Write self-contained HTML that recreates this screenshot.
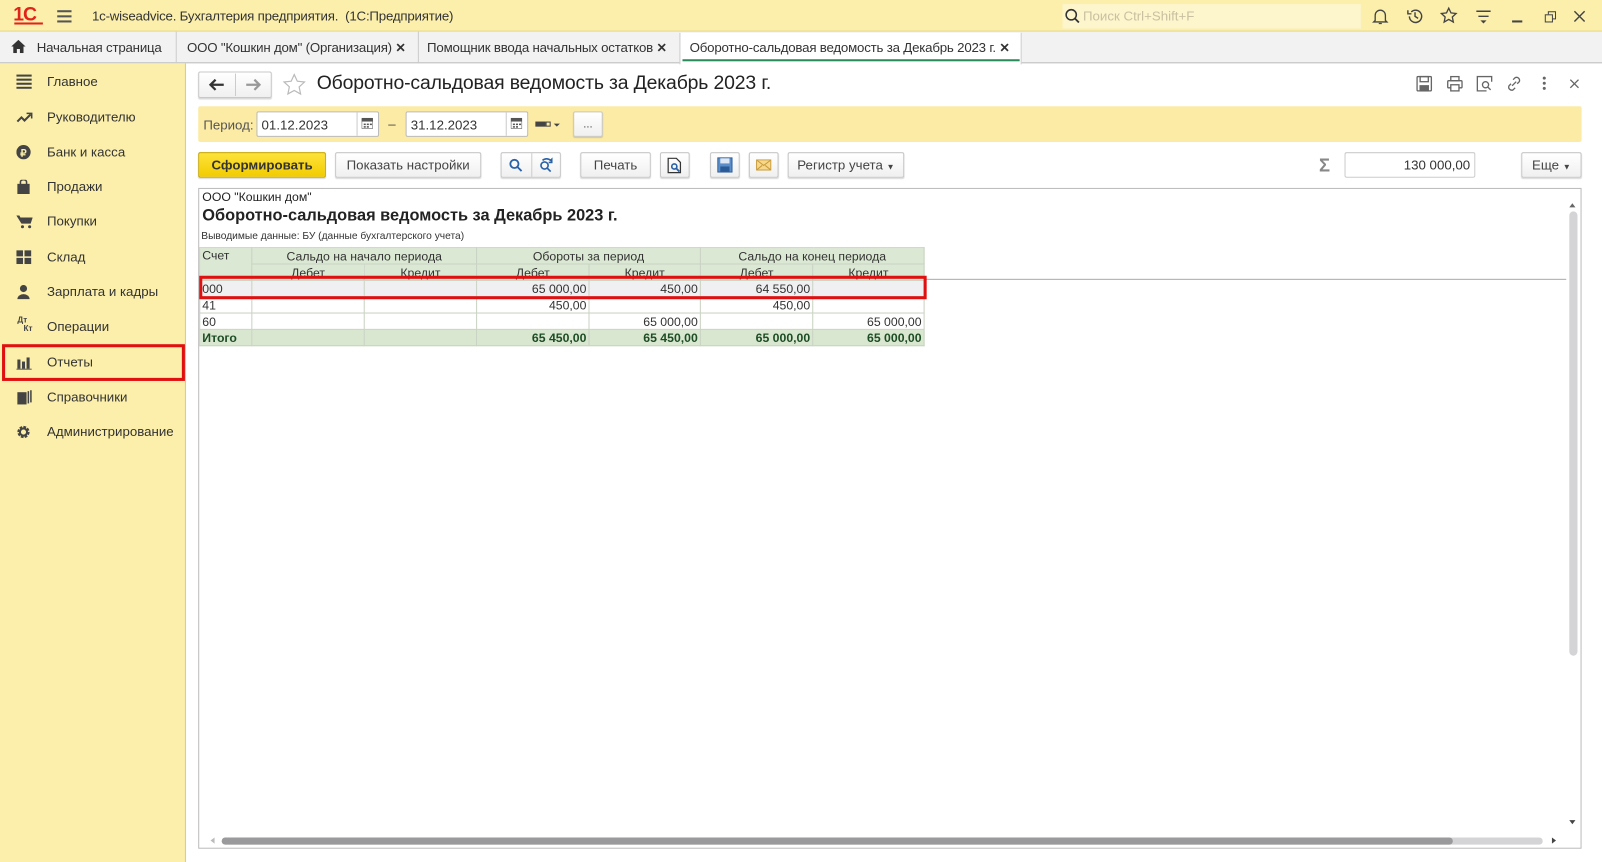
<!DOCTYPE html>
<html><head><meta charset="utf-8"><style>
*{box-sizing:border-box;margin:0;padding:0}
html,body{width:1602px;height:862px;overflow:hidden;background:#fff;font-family:"Liberation Sans",sans-serif;color:#333}
#w{position:absolute;left:0;top:0;width:1568px;height:844px;transform:scale(1.02168,1.02133);transform-origin:0 0;font-size:13px}
.a{position:absolute}
.btn{position:absolute;border:1px solid #c8c8c8;border-radius:2px;background:linear-gradient(#fff,#f0f0f0);box-shadow:0 1px 1px rgba(0,0,0,.15);text-align:center;font-size:13px;line-height:23px;color:#444}
.side div.it{position:absolute;left:0;width:181px;height:34px;line-height:34px}
.side .ic{position:absolute;left:16px;top:10px;width:16px;height:14px}
.side .tx{position:absolute;left:46px;font-size:13px;color:#333}
.tab{letter-spacing:-0.2px}
table{border-collapse:collapse;font-size:12px;position:absolute;left:195px;top:242px}
td{border:1px solid #c8d2c2;height:16px;padding:0 2px;color:#333;white-space:nowrap}
.h td{background:#dbe8d3;text-align:center;line-height:14px}
.r td{text-align:right}
.t td{background:#d9e7d0;font-weight:bold;color:#1d4d24;text-align:right}
</style></head><body><div id="w">
<!-- title bar -->
<div class="a" style="left:0;top:0;width:1568px;height:31px;background:#fbefab;border-bottom:1px solid #e2d48a"></div>
<div class="a" style="left:13px;top:4px;font:bold 19px 'Liberation Sans';color:#e0241c;letter-spacing:-1px">1С</div>
<div class="a" style="left:14px;top:22px;width:28px;height:2px;background:#e0241c"></div>
<div class="a" style="left:56px;top:10px;width:14px;height:2px;background:#555;box-shadow:0 5px 0 #555,0 10px 0 #555"></div>
<div class="a" style="left:90px;top:8px;font-size:13px;color:#333;letter-spacing:-0.2px">1c-wiseadvice. Бухгалтерия предприятия.&nbsp; (1С:Предприятие)</div>
<div class="a" style="left:1040px;top:4px;width:292px;height:24px;background:#fdf5cc"></div>
<svg class="a" style="left:1042px;top:8px" width="16" height="16"><circle cx="6.5" cy="6.5" r="5" fill="none" stroke="#333" stroke-width="1.5"/><path d="M10 10l4 4" stroke="#333" stroke-width="1.8"/></svg>
<div class="a" style="left:1060px;top:8px;font-size:13px;color:#c8c0a0">Поиск Ctrl+Shift+F</div>
<svg class="a" style="left:1342px;top:7px" width="18" height="18" fill="none" stroke="#444" stroke-width="1.3"><path d="M4 13V8a5 5 0 0110 0v5l1.5 1.5h-13z"/><path d="M7.5 16h3"/></svg>
<svg class="a" style="left:1376px;top:7px" width="18" height="18" fill="none" stroke="#444" stroke-width="1.4"><path d="M3.5 9a6 6 0 101.8-4.3"/><path d="M2 3v3.5h3.5M9 5v4l3 2"/></svg>
<svg class="a" style="left:1409px;top:6px" width="18" height="18" fill="none" stroke="#444" stroke-width="1.3"><path d="M9 2l2.2 4.6 5 .6-3.7 3.4 1 5L9 13l-4.5 2.6 1-5L1.8 7.2l5-.6z"/></svg>
<svg class="a" style="left:1443px;top:7px" width="18" height="18" stroke="#444" stroke-width="1.4"><path d="M2 4h14M4 9h10"/><path d="M6 13h6l-3 3z" fill="#444" stroke="none"/></svg>
<div class="a" style="left:1480px;top:20px;width:10px;height:1.5px;background:#444"></div>
<div class="a" style="left:1515px;top:11px;width:8px;height:8px;border:1.3px solid #444"></div>
<div class="a" style="left:1512px;top:14px;width:8px;height:8px;border:1.3px solid #444;background:#fbefab"></div>
<svg class="a" style="left:1540px;top:10px" width="12" height="12" stroke="#444" stroke-width="1.4"><path d="M1 1l10 10M11 1L1 11"/></svg>
<!-- tabs -->
<div class="a" style="left:0;top:31px;width:1568px;height:31px;background:#f2f2f2;border-bottom:1px solid #bbb"></div>
<svg class="a" style="left:11px;top:39px" width="14" height="13" fill="#333"><path d="M7 0L0 6.5h2V13h3.5V9h3v4H12V6.5h2z"/></svg>
<div class="a tab" style="left:36px;top:39px">Начальная страница</div>
<div class="a" style="left:172px;top:31px;width:1px;height:31px;background:#ccc"></div>
<div class="a tab" style="left:183px;top:39px">ООО "Кошкин дом" (Организация) <b style="font-size:12px">✕</b></div>
<div class="a" style="left:409px;top:31px;width:1px;height:31px;background:#ccc"></div>
<div class="a tab" style="left:418px;top:39px">Помощник ввода начальных остатков <b style="font-size:12px">✕</b></div>
<div class="a" style="left:665px;top:32px;width:335px;height:31px;background:#fff;border-left:1px solid #ccc;border-right:1px solid #ccc"></div>
<div class="a" style="left:668px;top:58px;width:330px;height:2px;background:#2a8a5a"></div>
<div class="a tab" style="left:675px;top:39px">Оборотно-сальдовая ведомость за Декабрь 2023 г. <b style="font-size:12px">✕</b></div>
<!-- sidebar -->
<div class="a side" style="left:0;top:62px;width:182px;height:782px;background:#fbefab;border-right:1px solid #d8cc8c">
<div class="it" style="top:1px"><svg class="ic" viewBox="0 0 16 14" fill="#444"><rect y="0" width="15" height="2"/><rect y="4" width="15" height="2"/><rect y="8" width="15" height="2"/><rect y="12" width="15" height="2"/></svg><span class="tx">Главное</span></div>
<div class="it" style="top:36px"><svg class="ic" viewBox="0 0 16 14" fill="none" stroke="#444" stroke-width="2"><path d="M1 11l4-4 3 3 6-6"/><path d="M10 3h5v5" stroke-width="1.5"/></svg><span class="tx">Руководителю</span></div>
<div class="it" style="top:70px"><svg class="ic" viewBox="0 0 16 14"><circle cx="7" cy="7" r="7" fill="#444"/><text x="7" y="11" font-size="10" fill="#fbefab" text-anchor="middle" font-weight="bold">₽</text></svg><span class="tx">Банк и касса</span></div>
<div class="it" style="top:104px"><svg class="ic" viewBox="0 0 16 14" fill="#444"><rect x="1" y="4" width="12" height="10"/><path d="M4 5V2a3 2 0 016 0v3" stroke="#444" fill="none" stroke-width="1.5"/></svg><span class="tx">Продажи</span></div>
<div class="it" style="top:138px"><svg class="ic" viewBox="0 0 16 14" fill="#444"><path d="M0 1h3l1 2h12l-2 6H5z"/><circle cx="6" cy="12" r="1.5"/><circle cx="13" cy="12" r="1.5"/></svg><span class="tx">Покупки</span></div>
<div class="it" style="top:173px"><svg class="ic" viewBox="0 0 16 14" fill="#444"><rect x="0" y="0" width="6.5" height="6"/><rect x="8" y="0" width="6.5" height="6"/><rect x="0" y="7.5" width="6.5" height="6"/><rect x="8" y="7.5" width="6.5" height="6"/></svg><span class="tx">Склад</span></div>
<div class="it" style="top:207px"><svg class="ic" viewBox="0 0 16 14" fill="#444"><circle cx="7" cy="3.5" r="3.5"/><path d="M1 14a6 5 0 0112 0z"/></svg><span class="tx">Зарплата и кадры</span></div>
<div class="it" style="top:241px"><span class="a" style="left:17px;top:-6px;font-size:8px;font-weight:bold;color:#444">Дт</span><span class="a" style="left:23px;top:2px;font-size:8px;font-weight:bold;color:#444">Кт</span><span class="tx">Операции</span></div>
<div class="it" style="top:276px"><svg class="ic" viewBox="0 0 16 14" fill="#444"><rect x="1" y="4" width="3" height="9"/><rect x="5.5" y="6" width="3" height="7"/><rect x="10" y="2" width="3" height="11"/><rect x="0" y="13" width="15" height="1"/></svg><span class="tx">Отчеты</span></div>
<div class="it" style="top:310px"><svg class="ic" viewBox="0 0 16 14" fill="#444"><rect x="1" y="2" width="9" height="12"/><rect x="11" y="1" width="1.5" height="12"/><rect x="13.5" y="0" width="1.5" height="12"/></svg><span class="tx">Справочники</span></div>
<div class="it" style="top:344px"><svg class="ic" viewBox="0 0 16 14"><circle cx="7" cy="7" r="4.5" fill="none" stroke="#444" stroke-width="3" stroke-dasharray="2.4 1.1"/><circle cx="7" cy="7" r="3.5" fill="none" stroke="#444" stroke-width="2"/></svg><span class="tx">Администрирование</span></div>
</div>
<div class="a" style="left:2px;top:337px;width:179px;height:36px;border:3px solid #e01010"></div>
<!-- header -->
<div class="btn" style="left:194px;top:70px;width:72px;height:26px"></div>
<div class="a" style="left:230px;top:72px;width:1px;height:22px;background:#ccc"></div>
<svg class="a" style="left:204px;top:76px" width="16" height="14"><path d="M15 7H3M7 2L2 7l5 5" stroke="#333" stroke-width="2.2" fill="none"/></svg>
<svg class="a" style="left:240px;top:76px" width="16" height="14"><path d="M1 7h12M9 2l5 5-5 5" stroke="#999" stroke-width="2.2" fill="none"/></svg>
<svg class="a" style="left:276px;top:71px" width="24" height="24" fill="none" stroke="#bbb" stroke-width="1.2"><path d="M12 2l3 6.5 7 .8-5.2 4.8 1.4 7L12 17.6 5.8 21l1.4-7L2 9.3l7-.8z"/></svg>
<div class="a" style="left:310px;top:71px;font-size:19px;color:#222;letter-spacing:-0.15px">Оборотно-сальдовая ведомость за Декабрь 2023 г.</div>
<svg class="a" style="left:1386px;top:74px" width="16" height="16" fill="none" stroke="#666" stroke-width="1.3"><rect x="1" y="1" width="14" height="14" rx="1"/><rect x="4" y="1" width="8" height="5"/><rect x="4" y="10" width="8" height="5" fill="#666"/></svg>
<svg class="a" style="left:1416px;top:74px" width="16" height="16" fill="none" stroke="#666" stroke-width="1.3"><rect x="4" y="1" width="8" height="4"/><rect x="1" y="5" width="14" height="7" rx="1"/><rect x="4" y="9" width="8" height="6" fill="#fff"/></svg>
<svg class="a" style="left:1445px;top:74px" width="16" height="16" fill="none" stroke="#666" stroke-width="1.3"><path d="M15 6V1H1v14h9"/><circle cx="9" cy="9" r="3"/><path d="M11 11l3 3"/></svg>
<svg class="a" style="left:1474px;top:74px" width="16" height="16" fill="none" stroke="#666" stroke-width="1.3"><path d="M7 4l2-2a3 3 0 014 4l-2 2M9 12l-2 2a3 3 0 01-4-4l2-2M6 10l4-4"/></svg>
<div class="a" style="left:1510px;top:75px;width:3px;height:3px;background:#666;border-radius:50%;box-shadow:0 5px 0 #666,0 10px 0 #666"></div>
<svg class="a" style="left:1536px;top:77px" width="10" height="10" stroke="#666" stroke-width="1.3"><path d="M1 1l8 8M9 1L1 9"/></svg>
<!-- period -->
<div class="a" style="left:194px;top:104px;width:1354px;height:35px;background:#fbeba5;border-radius:2px"></div>
<div class="a" style="left:199px;top:115px;color:#555">Период:</div>
<div class="a" style="left:251px;top:109px;width:120px;height:25px;background:#fff;border:1px solid #bbb;border-radius:2px"></div>
<div class="a" style="left:349px;top:110px;width:1px;height:23px;background:#ccc"></div>
<div class="a" style="left:256px;top:115px;color:#333">01.12.2023</div>
<div class="a" style="left:397px;top:109px;width:120px;height:25px;background:#fff;border:1px solid #bbb;border-radius:2px"></div>
<div class="a" style="left:495px;top:110px;width:1px;height:23px;background:#ccc"></div>
<div class="a" style="left:402px;top:115px;color:#333">31.12.2023</div>
<svg class="a" style="left:354px;top:115px" width="11" height="11" fill="#555"><rect x="0" y="1" width="11" height="10" fill="none" stroke="#555"/><rect x="0" y="1" width="11" height="3"/><rect x="2" y="6" width="2" height="1.5"/><rect x="5" y="6" width="2" height="1.5"/><rect x="8" y="6" width="2" height="1.5"/><rect x="2" y="8.5" width="2" height="1.5"/><rect x="5" y="8.5" width="2" height="1.5"/></svg>
<svg class="a" style="left:500px;top:115px" width="11" height="11" fill="#555"><rect x="0" y="1" width="11" height="10" fill="none" stroke="#555"/><rect x="0" y="1" width="11" height="3"/><rect x="2" y="6" width="2" height="1.5"/><rect x="5" y="6" width="2" height="1.5"/><rect x="8" y="6" width="2" height="1.5"/><rect x="2" y="8.5" width="2" height="1.5"/><rect x="5" y="8.5" width="2" height="1.5"/></svg>
<div class="a" style="left:380px;top:114px;color:#444">–</div>
<div class="a" style="left:524px;top:119px;width:10px;height:5px;background:#444"></div>
<div class="a" style="left:534px;top:119px;width:5px;height:5px;border:1px solid #444"></div>
<div class="a" style="left:542px;top:121px;border:3px solid transparent;border-top:3px solid #444"></div>
<div class="btn" style="left:561px;top:109px;width:29px;height:25px;font-size:11px;line-height:24px">...</div>
<!-- toolbar -->
<div class="btn" style="left:194px;top:149px;width:125px;height:25px;background:linear-gradient(#fde23a,#f2cc00);border-color:#c9a800;font-weight:bold;color:#333">Сформировать</div>
<div class="btn" style="left:328px;top:149px;width:143px;height:25px">Показать настройки</div>
<div class="btn" style="left:490px;top:149px;width:59px;height:25px"></div>
<div class="a" style="left:520px;top:150px;width:1px;height:23px;background:#ccc"></div>
<svg class="a" style="left:498px;top:155px" width="14" height="14" fill="none" stroke="#2a62a8" stroke-width="1.8"><circle cx="5.5" cy="5.5" r="4"/><path d="M8.5 8.5l4 4"/></svg>
<svg class="a" style="left:527px;top:154px" width="16" height="16" fill="none" stroke="#2a62a8" stroke-width="1.6"><circle cx="6" cy="8" r="3.5"/><path d="M8.5 10.5l3.5 3.5M4 3a6 6 0 018 0l1-1v3h-3"/></svg>
<div class="btn" style="left:568px;top:149px;width:69px;height:25px">Печать</div>
<div class="btn" style="left:646px;top:149px;width:29px;height:25px"></div>
<svg class="a" style="left:653px;top:154px" width="15" height="16" fill="none" stroke="#333" stroke-width="1.2"><path d="M1 1h8l4 4v10H1z"/><circle cx="7" cy="9" r="2.5" stroke="#2a62a8" stroke-width="1.6"/><path d="M9 11l3 3" stroke="#2a62a8" stroke-width="1.8"/></svg>
<div class="btn" style="left:695px;top:149px;width:29px;height:25px"></div>
<svg class="a" style="left:702px;top:154px" width="15" height="15"><rect x="0.5" y="0.5" width="14" height="14" fill="#5b8ec8" stroke="#2a5a98"/><rect x="3" y="1" width="9" height="5" fill="#dde8f4"/><rect x="3" y="9" width="9" height="5" fill="#2a5a98"/></svg>
<div class="btn" style="left:733px;top:149px;width:29px;height:25px"></div>
<svg class="a" style="left:740px;top:156px" width="15" height="11"><rect x="0.5" y="0.5" width="14" height="10" fill="#f7d78a" stroke="#c89a3a"/><path d="M1 1l6.5 5L14 1M1 10l5-4M14 10l-5-4" stroke="#c89a3a" fill="none"/></svg>
<div class="btn" style="left:771px;top:149px;width:114px;height:25px">Регистр учета <span style="font-size:8px">▼</span></div>
<div class="a" style="left:1291px;top:152px;font-size:18px;color:#888;font-weight:bold">Σ</div>
<div class="a" style="left:1316px;top:149px;width:128px;height:25px;border:1px solid #ccc;border-radius:2px;text-align:right;padding-right:4px;line-height:23px;color:#333">130 000,00</div>
<div class="btn" style="left:1489px;top:149px;width:59px;height:25px">Еще <span style="font-size:8px">▼</span></div>
<!-- report -->
<div class="a" style="left:194px;top:184px;width:1354px;height:647px;border:1px solid #bbb"></div>
<div class="a" style="left:198px;top:186px;font-size:12px;color:#222">ООО "Кошкин дом"</div>
<div class="a" style="left:198px;top:203px;font-size:16px;font-weight:bold;color:#222">Оборотно-сальдовая ведомость за Декабрь 2023 г.</div>
<div class="a" style="left:197px;top:226px;font-size:10px;color:#333">Выводимые данные: БУ (данные бухгалтерского учета)</div>
<div class="a" style="left:195px;top:273px;width:1338px;height:1px;background:#aaa"></div>
<table>
<colgroup><col style="width:51px"><col style="width:110px"><col style="width:110px"><col style="width:110px"><col style="width:109px"><col style="width:110px"><col style="width:109px"></colgroup>
<tr class="h"><td rowspan="2" style="text-align:left;vertical-align:top">Счет</td><td colspan="2">Сальдо на начало периода</td><td colspan="2">Обороты за период</td><td colspan="2">Сальдо на конец периода</td></tr>
<tr class="h" style="height:14px"><td style="height:14px;line-height:12px;overflow:hidden">Дебет</td><td>Кредит</td><td>Дебет</td><td>Кредит</td><td>Дебет</td><td>Кредит</td></tr>
<tr class="r" style="background:#f0f0f2"><td style="text-align:left">000</td><td></td><td></td><td>65 000,00</td><td>450,00</td><td>64 550,00</td><td></td></tr>
<tr class="r"><td style="text-align:left;height:14px">41</td><td></td><td></td><td>450,00</td><td></td><td>450,00</td><td></td></tr>
<tr class="r"><td style="text-align:left">60</td><td></td><td></td><td></td><td>65 000,00</td><td></td><td>65 000,00</td></tr>
<tr class="t"><td style="text-align:left">Итого</td><td></td><td></td><td>65 450,00</td><td>65 450,00</td><td>65 000,00</td><td>65 000,00</td></tr>
</table>
<div class="a" style="left:195px;top:270px;width:712px;height:23px;border:3px solid #e01010"></div>
<!-- scrollbars -->
<div class="a" style="left:1536px;top:196px;border:3px solid transparent;border-bottom:4px solid #666"></div>
<div class="a" style="left:1536px;top:207px;width:8px;height:435px;background:#d4d4d6;border-radius:4px"></div>
<div class="a" style="left:1536px;top:803px;border:3px solid transparent;border-top:4px solid #444"></div>
<div class="a" style="left:217px;top:820px;width:1293px;height:7px;background:#d4d4d6;border-radius:4px"></div>
<div class="a" style="left:217px;top:820px;width:1205px;height:7px;background:#9a9a9c;border-radius:4px"></div>
<div class="a" style="left:1519px;top:820px;border:3px solid transparent;border-left:4px solid #444"></div>
<div class="a" style="left:203px;top:820px;border:3px solid transparent;border-right:4px solid #bbb"></div>
</div></body></html>
